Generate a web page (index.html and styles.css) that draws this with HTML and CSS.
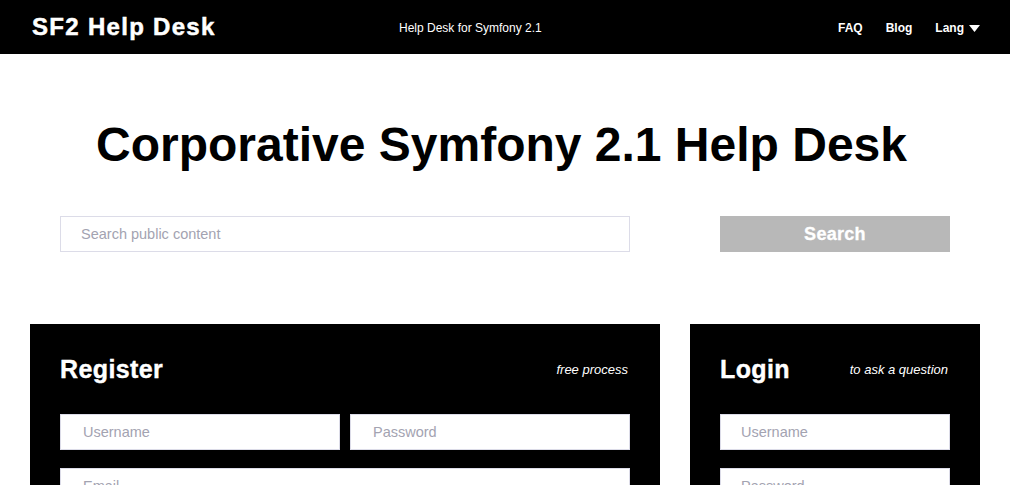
FILE: index.html
```html
<!DOCTYPE html>
<html lang="en">
<head>
<meta charset="utf-8">
<title>SF2 Help Desk</title>
<link rel="stylesheet" href="styles.css">
</head>
<body>
<header class="topbar">
  <div class="brand">SF2 Help Desk</div>
  <div class="tagline">Help Desk for Symfony 2.1</div>
  <nav class="nav">
    <a class="nav-link" href="#">FAQ</a>
    <a class="nav-link" href="#">Blog</a>
    <a class="nav-link lang" href="#">Lang <svg class="caret" width="11" height="7" viewBox="0 0 11 7"><path d="M0 0H11L5.5 7Z" fill="#fff"/></svg></a>
  </nav>
</header>
<main class="page">
  <h1 class="title">Corporative Symfony 2.1 Help Desk</h1>
  <form class="search-row">
    <div class="cell"><input class="field search-field" type="text" placeholder="Search public content"></div>
    <div class="cell"><button class="search-btn" type="button">Search</button></div>
  </form>
  <section class="cards">
    <div class="card">
      <div class="card-head">
        <h2 class="card-title">Register</h2>
        <span class="card-note">free process</span>
      </div>
      <div class="row two">
        <input class="field reg" type="text" placeholder="Username">
        <input class="field reg" type="password" placeholder="Password">
      </div>
      <div class="row">
        <input class="field reg" type="text" placeholder="Email">
      </div>
      <div class="row">
        <input class="field reg" type="text" placeholder="Company">
      </div>
    </div>
    <div class="card">
      <div class="card-head">
        <h2 class="card-title">Login</h2>
        <span class="card-note">to ask a question</span>
      </div>
      <div class="row">
        <input class="field" type="text" placeholder="Username">
      </div>
      <div class="row">
        <input class="field" type="password" placeholder="Password">
      </div>
    </div>
  </section>
</main>
</body>
</html>
```

FILE: styles.css
```css
* { box-sizing: border-box; }
html, body { margin: 0; padding: 0; background: #fff; }
body { font-family: "Liberation Sans", Arial, sans-serif; color: #000; }

.topbar {
  height: 54px;
  background: #000;
  color: #fff;
  display: flex;
  align-items: center;
  padding: 2px 30px 0 32px;
}
.brand {
  width: 367px;
  font-size: 24px;
  font-weight: 700;
  letter-spacing: 1.3px;
  -webkit-text-stroke: 0.5px #fff;
  line-height: 30px;
  margin-top: -2px;
}
.tagline { font-size: 12px; line-height: 16px; }
.nav { margin-left: auto; display: flex; align-items: center; gap: 23px; }
.nav-link { color: #fff; text-decoration: none; font-size: 12px; font-weight: 700; line-height: 16px; display: flex; align-items: center; }
.caret { margin-left: 5px; margin-top: 1px; }

.page { width: 950px; margin: 0 auto; padding-top: 63px; }
.title {
  margin: 0;
  padding-right: 7px;
  text-align: center;
  font-size: 48px;
  line-height: 56px;
  font-weight: 700;
}
.search-row {
  margin: 43px 0 0;
  display: grid;
  grid-template-columns: 630px 290px;
  column-gap: 30px;
}
.cell { padding: 0 30px; }
.field {
  display: block;
  width: 100%;
  height: 36px;
  border: 1px solid #dcdce8;
  background: #fff;
  padding: 0 20px;
  font-family: "Liberation Sans", Arial, sans-serif;
  font-size: 14.5px;
  color: #333;
  outline: none;
  border-radius: 0;
}
.field::placeholder { color: #a3a3b1; }
.field.reg { padding-left: 22px; }
.search-btn {
  display: block;
  width: 100%;
  height: 36px;
  border: 0;
  background: #b8b8b8;
  color: #fff;
  font-family: "Liberation Sans", Arial, sans-serif;
  font-size: 18px;
  font-weight: 700;
  -webkit-text-stroke: 0.3px #fff;
  letter-spacing: 0.3px;
}

.cards {
  margin-top: 72px;
  display: grid;
  grid-template-columns: 630px 290px;
  column-gap: 30px;
  align-items: start;
}
.card {
  background: #000;
  color: #fff;
  padding: 30px;
  min-height: 300px;
}
.card-head {
  display: flex;
  justify-content: space-between;
  align-items: center;
  height: 30px;
  margin-bottom: 30px;
}
.card-title {
  margin: 0;
  font-size: 25px;
  line-height: 30px;
  font-weight: 700;
  letter-spacing: 0.4px;
  -webkit-text-stroke: 0.4px #fff;
}
.card-note { font-size: 13px; font-style: italic; line-height: 16px; margin-top: 2px; margin-right: 2px; }
.row { margin-bottom: 18px; }
.row.two { display: grid; grid-template-columns: 1fr 1fr; column-gap: 10px; }
```
